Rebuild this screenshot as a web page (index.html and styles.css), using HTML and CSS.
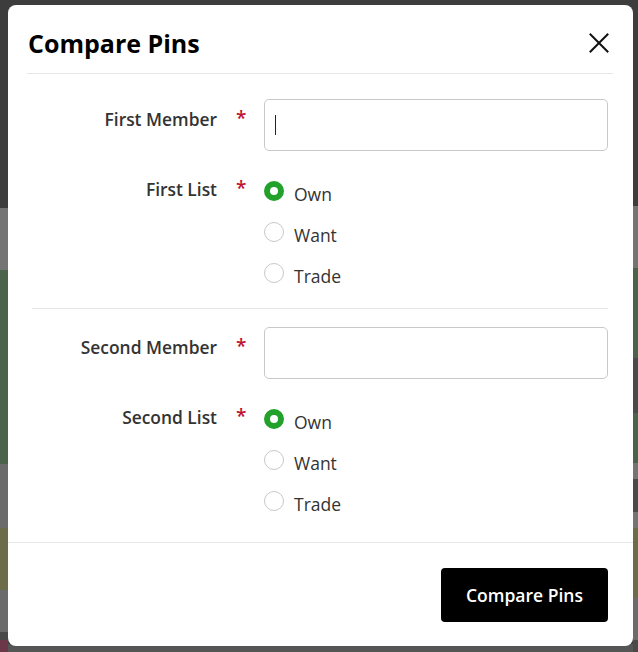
FILE: index.html
```html
<!DOCTYPE html>
<html lang="en">
<head>
<meta charset="utf-8">
<title>Compare Pins</title>
<link rel="stylesheet" href="styles.css">
</head>
<body>
<div class="backdrop">
  <div class="strip strip-left">
    <div class="band b-dark" style="height:208px"></div>
    <div class="band b-grey" style="height:62px"></div>
    <div class="band b-green" style="height:194px"></div>
    <div class="band b-mid" style="height:64px"></div>
    <div class="band b-olive" style="height:62px"></div>
    <div class="band b-mid" style="height:42px"></div>
    <div class="band b-deep" style="height:8px"></div>
    <div class="band b-maroon" style="height:12px"></div>
  </div>
  <div class="strip strip-center">
    <div class="band b-dark center-top"></div>
    <div class="band b-bottom"></div>
  </div>
  <div class="strip strip-right">
    <div class="band b-dark" style="height:206px"></div>
    <div class="band b-grey" style="height:62px"></div>
    <div class="band b-green" style="height:90px"></div>
    <div class="band b-deep" style="height:55px"></div>
    <div class="band b-green" style="height:50px"></div>
    <div class="band b-grey" style="height:16px"></div>
    <div class="band b-deep" style="height:33px"></div>
    <div class="band b-grey" style="height:16px"></div>
    <div class="band b-olive" style="height:70px"></div>
    <div class="band b-mid" style="height:42px"></div>
    <div class="band b-deep" style="height:12px"></div>
  </div>
</div>

<div class="modal" role="dialog" aria-labelledby="modal-title">
  <div class="modal-header">
    <h2 id="modal-title" class="modal-title">Compare Pins</h2>
    <button class="close-btn" aria-label="Close">
      <svg width="20" height="20" viewBox="0 0 20 20" aria-hidden="true">
        <path d="M1.5 1.5 L18.5 18.5 M18.5 1.5 L1.5 18.5" stroke="#111" stroke-width="2" fill="none" stroke-linecap="square"/>
      </svg>
    </button>
  </div>

  <div class="modal-body">
    <div class="form-row">
      <label class="field-label" for="m1">First Member</label>
      <span class="req">*</span>
      <div class="control input-wrap">
        <input id="m1" class="text-input" type="text">
        <span class="caret"></span>
      </div>
    </div>

    <div class="form-row radio-row">
      <span class="field-label">First List</span>
      <span class="req">*</span>
      <div class="control radio-group">
        <label class="radio"><span class="dot checked"></span><span class="radio-text">Own</span></label>
        <label class="radio"><span class="dot"></span><span class="radio-text">Want</span></label>
        <label class="radio"><span class="dot"></span><span class="radio-text">Trade</span></label>
      </div>
    </div>

    <hr class="divider">

    <div class="form-row">
      <label class="field-label" for="m2">Second Member</label>
      <span class="req">*</span>
      <div class="control input-wrap">
        <input id="m2" class="text-input" type="text">
      </div>
    </div>

    <div class="form-row radio-row">
      <span class="field-label">Second List</span>
      <span class="req">*</span>
      <div class="control radio-group">
        <label class="radio"><span class="dot checked"></span><span class="radio-text">Own</span></label>
        <label class="radio"><span class="dot"></span><span class="radio-text">Want</span></label>
        <label class="radio"><span class="dot"></span><span class="radio-text">Trade</span></label>
      </div>
    </div>
  </div>

  <div class="modal-footer">
    <button class="primary-btn">Compare Pins</button>
  </div>
</div>
</body>
</html>
```

FILE: styles.css
```css
* { box-sizing: border-box; }

html, body {
  margin: 0;
  padding: 0;
  width: 638px;
  height: 652px;
  overflow: hidden;
  font-family: "Open Sans", "Liberation Sans", sans-serif;
}

.backdrop {
  display: grid;
  grid-template-columns: 8px 1fr 5px;
  width: 638px;
  height: 652px;
  background: #444;
}

.strip {
  display: flex;
  flex-direction: column;
  height: 652px;
}

.band { flex-shrink: 0; }
.b-dark { background: #3d3d3d; }
.b-grey { background: #747474; }
.b-green { background: #4b6349; }
.b-mid { background: #6b6b6b; }
.b-olive { background: #6c6b4a; }
.b-deep { background: #4a4a4a; }
.b-maroon { background: #6a3848; }

.center-top { flex: 1; }
.b-bottom { height: 8px; background: #555; }

.modal {
  position: absolute;
  left: 8px;
  top: 5px;
  width: 625px;
  height: 641px;
  background: #fff;
  border-radius: 8px;
  display: flex;
  flex-direction: column;
}

.modal-header {
  margin: 0 20px 0 19px;
  height: 69px;
  border-bottom: 1px solid #e6e6e6;
  display: flex;
  align-items: center;
  justify-content: space-between;
}

.modal-title {
  margin: 0 0 0 1px;
  font-size: 25px;
  font-weight: 700;
  color: #000;
  line-height: 32px;
  padding-top: 8px;
}

.close-btn {
  border: 0;
  background: none;
  padding: 0;
  width: 20px;
  height: 20px;
  margin-right: 4px;
  margin-top: 8px;
  display: flex;
}

.modal-body {
  padding: 25px 25px 20px 24px;
  flex: 1;
}

.form-row {
  display: flex;
  align-items: flex-start;
}

.radio-row { margin-top: 19px; }

.field-label {
  width: 185px;
  flex-shrink: 0;
  text-align: right;
  font-size: 17.4px;
  font-weight: 600;
  color: #333;
  line-height: 24px;
  padding-top: 8px;
}

.radio-row .field-label { padding-top: 7px; }

.req {
  width: 47px;
  flex-shrink: 0;
  padding-left: 19px;
  color: #c0122f;
  font-size: 19px;
  font-weight: 600;
  line-height: 24px;
  padding-top: 7px;
}

.radio-row .req { padding-top: 6px; }

.control { flex: 1; }

.input-wrap { position: relative; }

.text-input {
  display: block;
  width: 100%;
  height: 52px;
  border: 1px solid #c8c8c8;
  border-radius: 5px;
  background: #fff;
  font: inherit;
  font-size: 17px;
  padding: 0 12px;
  outline: none;
}

.caret {
  position: absolute;
  left: 11px;
  top: 16px;
  width: 1px;
  height: 20px;
  background: #222;
}

.radio-group {
  display: flex;
  flex-direction: column;
}

.radio {
  display: flex;
  align-items: center;
  height: 41px;
}

.dot {
  width: 20px;
  height: 20px;
  border-radius: 50%;
  border: 1px solid #c8c8c8;
  background: #fff;
  flex-shrink: 0;
}

.dot.checked {
  border: 6px solid #22a22b;
}

.radio-text {
  margin-left: 10px;
  font-size: 17.5px;
  color: #333;
  line-height: 24px;
  padding-top: 7px;
}

.divider {
  border: 0;
  border-top: 1px solid #e6e6e6;
  margin: 15px 0 18px;
}

.modal-footer {
  border-top: 1px solid #e6e6e6;
  padding: 25px 25px 24px;
  display: flex;
  justify-content: flex-end;
}

.primary-btn {
  width: 167px;
  height: 54px;
  background: #000;
  color: #fff;
  border: 0;
  border-radius: 4px;
  font-family: "Open Sans", "Liberation Sans", sans-serif;
  font-size: 17.5px;
  font-weight: 600;
}
```
